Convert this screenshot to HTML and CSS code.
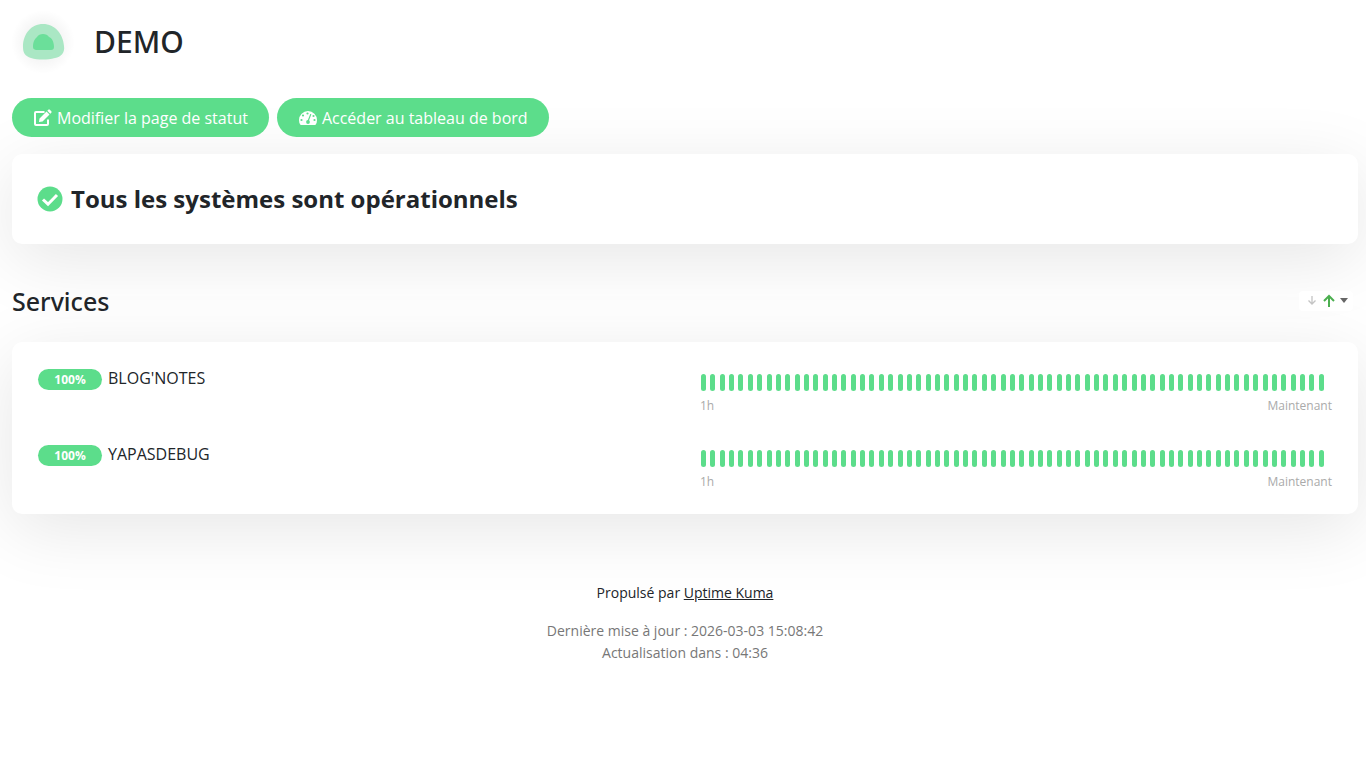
FILE: index.html
```html
<!DOCTYPE html>
<html lang="fr">
<head>
<meta charset="utf-8">
<meta name="viewport" content="width=device-width, initial-scale=1">
<title>DEMO</title>
<link rel="stylesheet" href="styles.css">
</head>
<body>
<main class="page">
  <header class="header">
    <svg class="logo" viewBox="0 0 64 64" aria-hidden="true">
      <defs>
        <radialGradient id="halo">
          <stop offset=".6" stop-color="#000" stop-opacity=".035"/>
          <stop offset="1" stop-color="#000" stop-opacity="0"/>
        </radialGradient>
      </defs>
      <circle cx="31" cy="32" r="32" fill="url(#halo)"/>
      <path fill="#aae7c4" d="M11 37C11 24 19 14 31 14S51 24 52 36C53 43 49 47 43 48C35 50 26 50 19 48C13 46 11 43 11 37Z"/>
      <path fill="#6bdf9a" d="M21 37C21 31 23 29 25 27C27 23 35 23 37 27C40 28 42 32 42 37C42 39 41 40 39 40H24C22 39 21 39 21 37Z"/>
    </svg>
    <h1 class="title">DEMO</h1>
  </header>

  <nav class="actions">
    <button class="btn" type="button">
      <svg class="btn-icon" viewBox="0 0 20 18" aria-hidden="true"><path fill="none" stroke="currentColor" stroke-width="2" stroke-linejoin="round" d="M11.500 3H3Q2 3 2 4V15Q2 16 3 16H14Q15 16 15 15V10.500"/><path fill="currentColor" d="M6.500 9.500L13.500 2.500L16.500 5.500L9.500 12.500L6 13ZM14.300 1.700L15.300.7Q16 0 16.800.7L18.300 2.200Q19 3 18.300 3.700L17.300 4.700Z"/></svg>
      <span>Modifier la page de statut</span>
    </button>
    <button class="btn" type="button">
      <svg class="btn-icon" viewBox="0 0 20 18" aria-hidden="true"><path fill="currentColor" d="M10 2A9 9 0 0 0 1 11Q1 13.800 2.300 15.500Q2.600 16 3.200 16H16.800Q17.400 16 17.700 15.500Q19 13.800 19 11A9 9 0 0 0 10 2Z"/><g fill="#5cdd8b"><circle cx="9.500" cy="4.500" r="1.100"/><circle cx="5" cy="6.500" r="1.100"/><circle cx="3.500" cy="11" r="1.100"/><circle cx="16.500" cy="11" r="1.100"/><circle cx="15.500" cy="7" r="1.100"/></g><path stroke="#5cdd8b" stroke-width="1.200" stroke-linecap="round" d="M10.300 11.500L12.700 5.500"/><circle cx="10" cy="13" r="1.900" fill="#5cdd8b"/></svg>
      <span>Accéder au tableau de bord</span>
    </button>
  </nav>

  <section class="card status">
    <svg class="status-icon" viewBox="0 0 26 26" aria-hidden="true"><circle cx="13" cy="13" r="12.500" fill="#5cdd8b"/><path fill="none" stroke="#fff" stroke-width="3" d="M6 13.500L11 18.200L20 9"/></svg>
    <span>Tous les systèmes sont opérationnels</span>
  </section>

  <section class="group">
    <div class="group-head">
      <h2 class="group-title">Services</h2>
      <button class="sort" type="button" aria-label="Trier">
        <svg class="sort-icon" viewBox="0 0 54 20" aria-hidden="true"><path fill="none" stroke="#c4c4c4" stroke-width="1.300" d="M13 5V13M9.500 9.500L13 13L16.500 9.500"/><path fill="none" stroke="#4caf50" stroke-width="2" d="M30 16V5M25 10L30 5L35 10"/><path fill="#666" d="M41 7H49L45 12Z"/></svg>
      </button>
    </div>
    <div class="card monitors">
      <article class="monitor">
        <div class="monitor-info"><span class="badge">100%</span><span>BLOG'NOTES</span></div>
        <div class="history">
          <div class="beats"></div>
          <div class="range"><span>1h</span><span>Maintenant</span></div>
        </div>
      </article>
      <article class="monitor">
        <div class="monitor-info"><span class="badge">100%</span><span>YAPASDEBUG</span></div>
        <div class="history">
          <div class="beats"></div>
          <div class="range"><span>1h</span><span>Maintenant</span></div>
        </div>
      </article>
    </div>
  </section>

  <footer class="footer">
    <p class="powered">Propulsé par <a class="link" href="#">Uptime Kuma</a></p>
    <div class="refresh">
      <div>Dernière mise à jour : 2026-03-03 15:08:42</div>
      <div>Actualisation dans : 04:36</div>
    </div>
  </footer>
</main>
<script src="script.js"></script>
</body>
</html>
```
FILE: styles.css
```css
* {
  box-sizing: border-box;
}

body {
  margin: 0;
  background: #fff;
  color: #212529;
  font-family: "Segoe UI", "Open Sans", "Noto Sans", sans-serif;
  font-size: 16px;
  line-height: 24px;
}

button {
  border: 0;
  font: inherit;
  cursor: pointer;
}

.page {
  padding: 10px 8px 0 12px;
}

.header {
  display: flex;
  align-items: center;
  gap: 18px;
  height: 64px;
}

.logo {
  width: 64px;
  height: 64px;
}

.title,
.group-title {
  margin: 0;
  font-family: "Segoe UI", "Noto Sans", "Open Sans", sans-serif;
  font-weight: 500;
}

.title {
  font-size: 30px;
  line-height: 40px;
}

.actions {
  display: flex;
  gap: 8px;
  margin-top: 24px;
}

.btn {
  display: flex;
  align-items: center;
  gap: 4px;
  height: 39px;
  padding: 0 21px;
  border-radius: 20px;
  background: #5cdd8b;
  color: #fff;
}

.btn-icon {
  width: 20px;
  height: 18px;
}

.card {
  border-radius: 10px;
  background: #fff;
  box-shadow: 0 15px 70px rgba(0, 0, 0, 0.1);
}

.status {
  display: flex;
  align-items: center;
  gap: 8px;
  margin-top: 17px;
  padding: 25px;
  font-size: 24px;
  font-weight: 700;
  line-height: 40px;
}

.status-icon {
  width: 26px;
  height: 26px;
}

.group {
  margin-top: 38px;
}

.group-head {
  display: flex;
  align-items: center;
  justify-content: space-between;
  padding-right: 5px;
}

.group-title {
  font-size: 25px;
  line-height: 38px;
}

.sort {
  padding: 0;
  border-radius: 4px;
  background: #fff;
}

.sort-icon {
  display: block;
  width: 54px;
  height: 20px;
}

.monitors {
  margin-top: 22px;
  padding: 10px 26px;
}

.monitor {
  display: grid;
  grid-template-columns: 1fr 1fr;
  gap: 30px;
  padding: 14px 0 10px;
  height: 76px;
}

.monitor-info {
  display: flex;
  align-items: flex-start;
  gap: 6px;
}

.badge {
  width: 64px;
  margin-top: 3px;
  border-radius: 11px;
  background: #5cdd8b;
  color: #fff;
  font-size: 12px;
  font-weight: 700;
  line-height: 21px;
  text-align: center;
}

.beats {
  display: flex;
  justify-content: space-between;
  padding: 8px 8px 0 1px;
}

.beat {
  width: 5px;
  height: 17px;
  border-radius: 3px;
  background: #5cdd8b;
}

.range {
  display: flex;
  justify-content: space-between;
  margin-top: 6px;
  color: #aaa;
  font-size: 12px;
  line-height: 18px;
}

.footer {
  margin-top: 68px;
  font-size: 14px;
  line-height: 22px;
  text-align: center;
}

.powered {
  margin: 0 0 16px;
}

.link {
  color: inherit;
}

.refresh {
  color: #777;
}
```
FILE: script.js
```js
const BEAT_COUNT = 67;

document.querySelectorAll(".beats").forEach((list) => {
  for (let i = 0; i < BEAT_COUNT; i++) {
    const beat = document.createElement("span");
    beat.className = "beat";
    list.append(beat);
  }
});
```
